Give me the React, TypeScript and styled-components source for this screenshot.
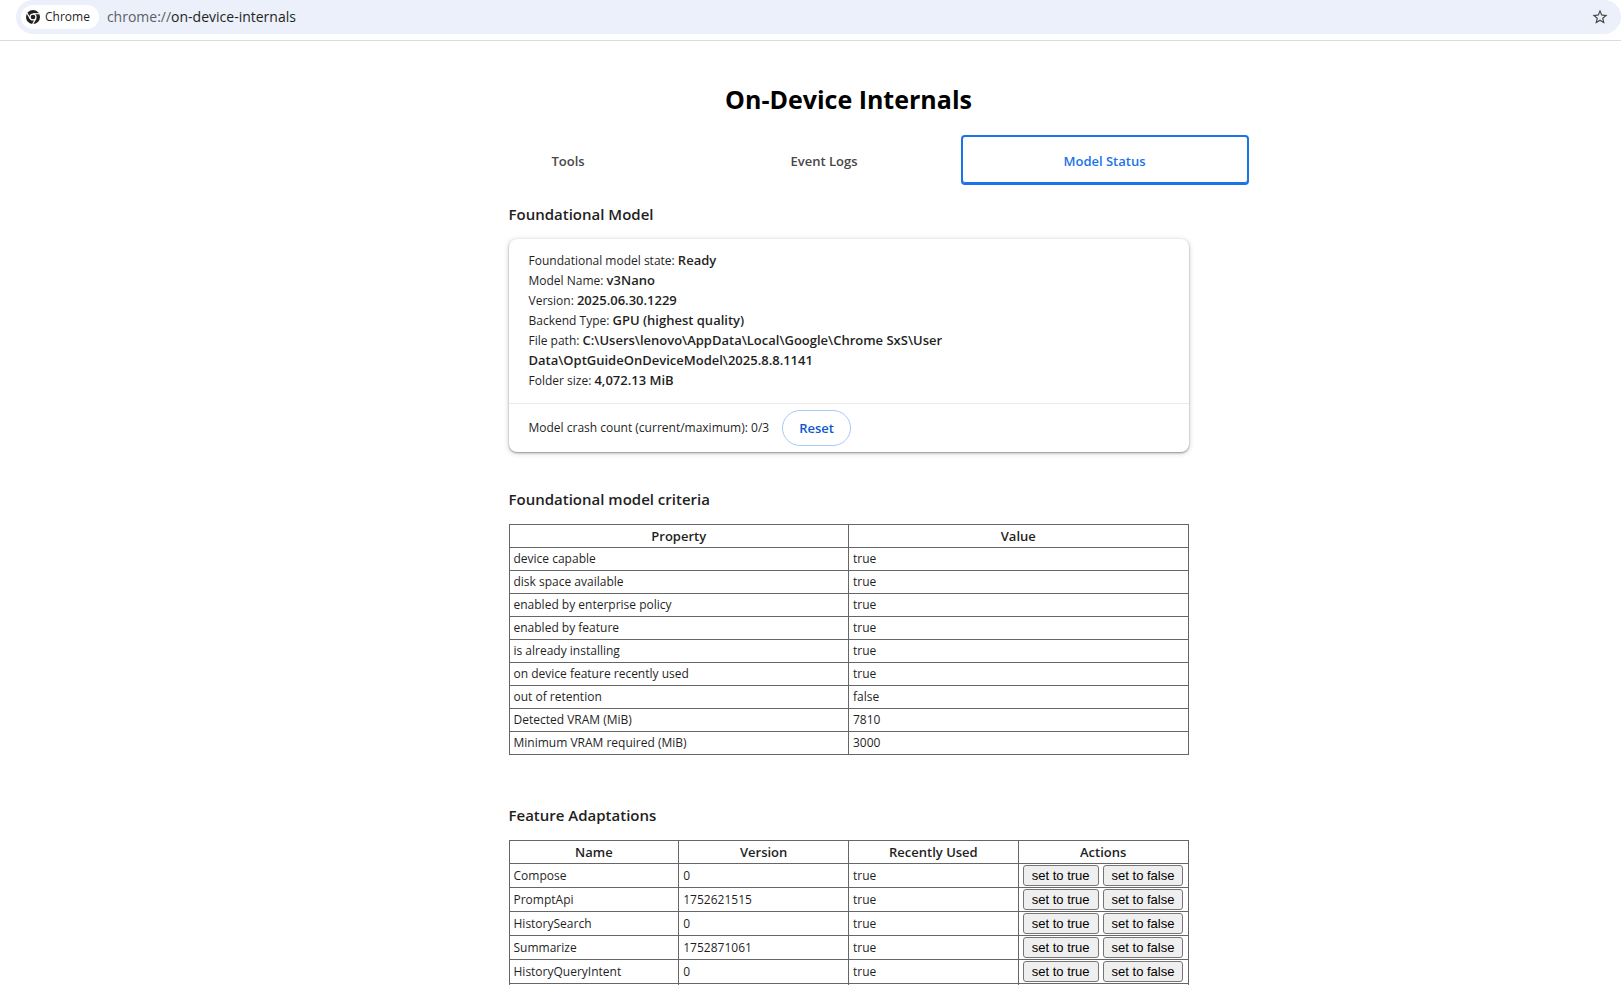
import React from "react";
import styled, { createGlobalStyle } from "styled-components";
import { MdStarOutline } from "react-icons/md";

const GlobalStyle = createGlobalStyle`
  * { box-sizing: border-box; }
  html, body { height: 100%; margin: 0; overflow: hidden; }
  #root { height: 100%; }
  body {
    background: #fff;
    color: #1f1f1f;
    font-family: "Segoe UI", "Open Sans", "Noto Sans", sans-serif;
    font-size: 12px;
    line-height: 20px;
  }
`;

const Window = styled.div`
  height: 100%;
  overflow: hidden;
`;

const Toolbar = styled.header`
  height: 41px;
  padding-left: 16px;
  border-bottom: 1px solid #dadce0;
`;

const AddressBar = styled.div`
  display: flex;
  align-items: center;
  height: 34px;
  padding: 0 12px 0 5px;
  border-radius: 17px;
  background: #ecf0fa;
`;

const SiteChip = styled.button`
  display: flex;
  align-items: center;
  gap: 5px;
  height: 24px;
  padding: 0 9px 0 5px;
  border: 0;
  border-radius: 12px;
  background: #fff;
  color: #1f1f1f;
  font: inherit;
`;

const Address = styled.div`
  flex: 1;
  padding-left: 8px;
  font-size: 14px;
  color: #1f1f1f;
`;

const Scheme = styled.span`
  color: #5b5f65;
`;

const StarButton = styled.button`
  display: flex;
  padding: 0;
  border: 0;
  background: none;
  color: #474747;
`;

const Page = styled.main`
  display: flex;
  flex-direction: column;
  align-items: center;
  margin-left: 76px;
`;

const Title = styled.h1`
  margin: 40px 0 18px;
  font-size: 25px;
  line-height: 36px;
  font-weight: 700;
  color: #000;
`;

const Tabs = styled.nav`
  display: flex;
  width: 100%;
  max-width: 800px;
`;

const Tab = styled.button<{ $selected?: boolean }>`
  flex: auto;
  height: 50px;
  padding: 2px 0 0;
  border: 2px solid ${(p) => (p.$selected ? "#1a73e8" : "transparent")};
  border-radius: 4px;
  box-shadow: ${(p) => (p.$selected ? "inset 0 -1px #1a73e8" : "none")};
  background: none;
  color: ${(p) => (p.$selected ? "#1a73e8" : "#474747")};
  font: inherit;
  font-size: 13px;
  font-weight: 600;
`;

const Content = styled.div`
  width: 100%;
  max-width: 680px;
`;

const Section = styled.section`
  margin-top: 19px;
`;

const SectionTitle = styled.h2`
  margin: 0 0 15px;
  font-size: 15px;
  line-height: 20px;
  font-weight: 600;
`;

const Card = styled.div`
  margin-bottom: 37px;
  border-radius: 8px;
  background: #fff;
  box-shadow: 0 1px 2px rgba(60, 64, 67, 0.5), 0 1px 5px 1px rgba(60, 64, 67, 0.16);
`;

const Details = styled.div`
  padding: 12px 220px 12px 20px;
`;

const DetailValue = styled.b`
  font-size: 13px;
  line-height: 16px;
  font-weight: 600;
`;

const CrashRow = styled.div`
  display: flex;
  align-items: center;
  gap: 13px;
  height: 49px;
  padding: 0 20px;
  border-top: 1px solid #ebebeb;
`;

const ResetButton = styled.button`
  height: 36px;
  padding: 0 16px;
  border: 1px solid #a8c7fa;
  border-radius: 18px;
  background: #fff;
  color: #0b57d0;
  font: inherit;
  font-size: 13px;
  font-weight: 600;
`;

const DataTable = styled.table`
  width: 100%;
  margin: 1px 0 50px;
  border-collapse: collapse;
  table-layout: fixed;
`;

const cell = `
  border: 1px solid #666;
  text-align: left;
`;

const HeadCell = styled.th`
  ${cell}
  height: 23px;
  padding: 0 4px;
  font-size: 13px;
  font-weight: 600;
  text-align: center;
`;

const Cell = styled.td<{ $tall?: boolean }>`
  ${cell}
  height: ${(p) => (p.$tall ? 24 : 23)}px;
  padding: 0 4px;
`;

const Actions = styled.div`
  display: flex;
  gap: 4px;
`;

const ActionButton = styled.button`
  height: 21px;
  padding: 0 8px;
  border: 1px solid #767676;
  border-radius: 3px;
  background: #efefef;
  color: #000;
  font: 13px/16px "Liberation Sans", Arial, sans-serif;
  white-space: nowrap;
`;

const details = [
  ["Foundational model state", "Ready"],
  ["Model Name", "v3Nano"],
  ["Version", "2025.06.30.1229"],
  ["Backend Type", "GPU (highest quality)"],
  [
    "File path",
    "C:\\Users\\lenovo\\AppData\\Local\\Google\\Chrome SxS\\User Data\\OptGuideOnDeviceModel\\2025.8.8.1141",
  ],
  ["Folder size", "4,072.13 MiB"],
];

const criteria = [
  ["device capable", "true"],
  ["disk space available", "true"],
  ["enabled by enterprise policy", "true"],
  ["enabled by feature", "true"],
  ["is already installing", "true"],
  ["on device feature recently used", "true"],
  ["out of retention", "false"],
  ["Detected VRAM (MiB)", "7810"],
  ["Minimum VRAM required (MiB)", "3000"],
];

const features = [
  ["Compose", "0", "true"],
  ["PromptApi", "1752621515", "true"],
  ["HistorySearch", "0", "true"],
  ["Summarize", "1752871061", "true"],
  ["HistoryQueryIntent", "0", "true"],
];

function ChromeLogo() {
  return (
    <svg width="14" height="14" viewBox="0 0 24 24" aria-hidden="true">
      <circle cx="12" cy="12" r="12" fill="#1f1f1f" />
      <g stroke="#fff" strokeWidth="2" fill="none">
        <path d="M12 6.4H23" />
        <path d="M7.2 14.8L1.6 5.2" />
        <path d="M16.8 14.8L11.4 24" />
      </g>
      <circle cx="12" cy="12" r="6.2" fill="#fff" />
      <circle cx="12" cy="12" r="4" fill="#1f1f1f" />
    </svg>
  );
}

export default function App() {
  return (
    <Window>
      <GlobalStyle />
      <Toolbar>
        <AddressBar>
          <SiteChip>
            <ChromeLogo />
            Chrome
          </SiteChip>
          <Address>
            <Scheme>chrome://</Scheme>on-device-internals
          </Address>
          <StarButton aria-label="Bookmark this tab">
            <MdStarOutline size={18} />
          </StarButton>
        </AddressBar>
      </Toolbar>
      <Page>
        <Title>On-Device Internals</Title>
        <Tabs>
          <Tab>Tools</Tab>
          <Tab>Event Logs</Tab>
          <Tab $selected>Model Status</Tab>
        </Tabs>
        <Content>
          <Section>
            <SectionTitle>Foundational Model</SectionTitle>
            <Card>
              <Details>
                {details.map(([label, value]) => (
                  <div key={label}>
                    {label}: <DetailValue>{value}</DetailValue>
                  </div>
                ))}
              </Details>
              <CrashRow>
                <span>Model crash count (current/maximum): 0/3</span>
                <ResetButton>Reset</ResetButton>
              </CrashRow>
            </Card>
          </Section>
          <Section>
            <SectionTitle>Foundational model criteria</SectionTitle>
            <DataTable>
              <thead>
                <tr>
                  <HeadCell>Property</HeadCell>
                  <HeadCell>Value</HeadCell>
                </tr>
              </thead>
              <tbody>
                {criteria.map(([property, value]) => (
                  <tr key={property}>
                    <Cell>{property}</Cell>
                    <Cell>{value}</Cell>
                  </tr>
                ))}
              </tbody>
            </DataTable>
          </Section>
          <Section>
            <SectionTitle>Feature Adaptations</SectionTitle>
            <DataTable>
              <thead>
                <tr>
                  <HeadCell>Name</HeadCell>
                  <HeadCell>Version</HeadCell>
                  <HeadCell>Recently Used</HeadCell>
                  <HeadCell>Actions</HeadCell>
                </tr>
              </thead>
              <tbody>
                {features.map(([name, version, used]) => (
                  <tr key={name}>
                    <Cell $tall>{name}</Cell>
                    <Cell $tall>{version}</Cell>
                    <Cell $tall>{used}</Cell>
                    <Cell $tall>
                      <Actions>
                        <ActionButton>set to true</ActionButton>
                        <ActionButton>set to false</ActionButton>
                      </Actions>
                    </Cell>
                  </tr>
                ))}
                <tr>
                  <Cell $tall />
                  <Cell $tall />
                  <Cell $tall />
                  <Cell $tall />
                </tr>
              </tbody>
            </DataTable>
          </Section>
        </Content>
      </Page>
    </Window>
  );
}
